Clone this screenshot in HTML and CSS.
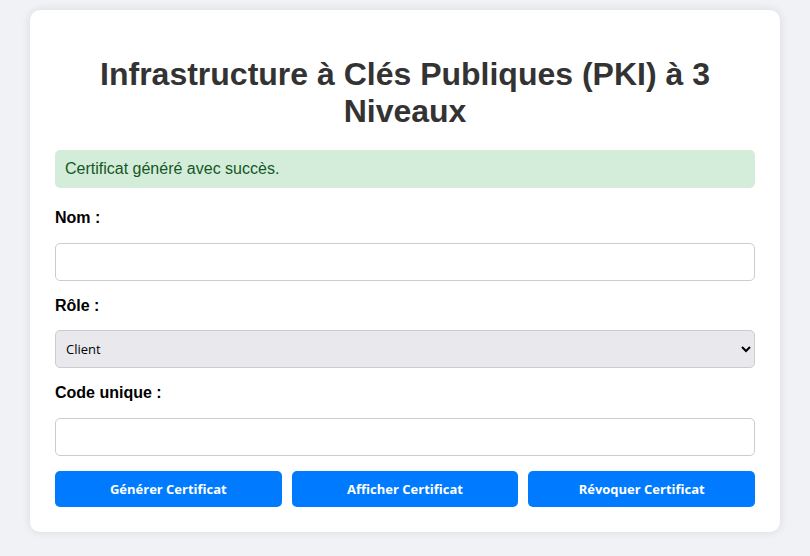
FILE: index.html
```html
<!DOCTYPE html>
<html lang="fr">
<head>
<meta charset="utf-8">
<title>PKI à 3 Niveaux</title>
<link rel="stylesheet" href="styles.css">
</head>
<body>
<div class="card">
  <h1 class="title">Infrastructure à Clés Publiques (PKI) à 3 Niveaux</h1>
  <div class="alert">Certificat généré avec succès.</div>
  <form class="form">
    <label class="label" for="nom">Nom :</label>
    <input class="field" type="text" id="nom">
    <label class="label" for="role">Rôle :</label>
    <select class="field select" id="role">
      <option>Client</option>
      <option>Serveur</option>
    </select>
    <label class="label" for="code">Code unique :</label>
    <input class="field" type="text" id="code">
    <div class="actions">
      <button type="button" class="btn">Générer Certificat</button>
      <button type="button" class="btn">Afficher Certificat</button>
      <button type="button" class="btn">Révoquer Certificat</button>
    </div>
  </form>
</div>
</body>
</html>
```

FILE: styles.css
```css
html, body {
  margin: 0;
}
body {
  background: #f0f2f5;
  padding: 10px 0;
  font-family: "Liberation Sans", Arial, sans-serif;
}
.card {
  width: 700px;
  margin: 0 auto;
  padding: 25px;
  background: #ffffff;
  border-radius: 10px;
  box-shadow: 0 0 10px rgba(0, 0, 0, 0.1);
}
.title {
  font-size: 32px;
  line-height: 37px;
  color: #333333;
  text-align: center;
  margin: 21px 0 20px;
  font-weight: bold;
}
.alert {
  background: #d4edda;
  color: #155724;
  padding: 10px;
  border-radius: 5px;
  font-size: 16px;
  line-height: 18.4px;
  margin-bottom: 20px;
}
.form {
  display: flex;
  flex-direction: column;
}
.label {
  font-weight: bold;
  font-size: 16px;
  line-height: 20px;
  color: #000;
  margin-bottom: 14.4px;
}
.field {
  box-sizing: border-box;
  height: 38px;
  width: 100%;
  border: 1px solid #cccccc;
  border-radius: 5px;
  padding: 0 10px;
  margin: 0 0 15px;
  font-family: "Open Sans", "Noto Sans", sans-serif;
  font-size: 13px;
  background: #ffffff;
}
.select {
  padding: 0 10px 0 6px;
  background-color: #e9e9ed;
  color: #000;
}
.actions {
  display: flex;
  gap: 10px;
}
.btn {
  flex: 1;
  height: 36px;
  border: 0;
  border-radius: 5px;
  background: #007bff;
  color: #ffffff;
  font-family: "Open Sans", "Noto Sans", sans-serif;
  font-weight: bold;
  font-size: 13px;
}
```
